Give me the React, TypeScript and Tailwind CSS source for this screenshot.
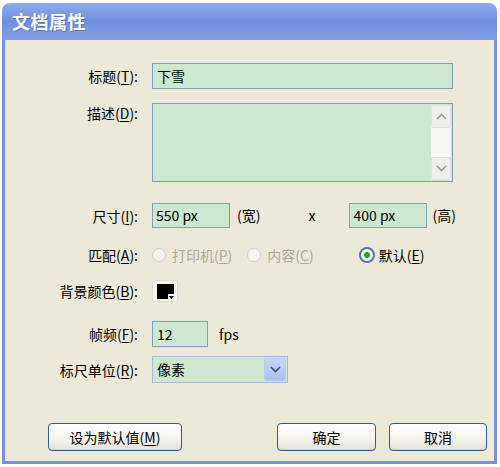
import React from "react";

const font = { fontFamily: '"Noto Sans CJK SC", "Noto Sans", sans-serif' };

function Label({ children }: { children: React.ReactNode }) {
  return (
    <div className="w-[133px] text-right text-[14px] leading-none text-black shrink-0">
      {children}
    </div>
  );
}

function U({ children }: { children: React.ReactNode }) {
  return <span className="underline underline-offset-2">{children}</span>;
}

function Chevron({ up, color = "#9b9b9b" }: { up?: boolean; color?: string }) {
  return (
    <svg width="11" height="7" viewBox="0 0 11 7">
      <path
        d={up ? "M1 6 L5.5 1.5 L10 6" : "M1 1 L5.5 5.5 L10 1"}
        fill="none"
        stroke={color}
        strokeWidth="1.6"
      />
    </svg>
  );
}

function Radio({ checked, disabled }: { checked?: boolean; disabled?: boolean }) {
  return (
    <div
      className={
        "rounded-full flex items-center justify-center shrink-0 " +
        (disabled
          ? "w-[14px] h-[14px] border border-[#d2d0c4] bg-[#f4f3ee]"
          : "w-[16px] h-[16px] border-2 border-[#4f74a4] bg-white")
      }
    >
      {checked && <div className="w-[6px] h-[6px] rounded-full bg-[#21a121]" />}
    </div>
  );
}

function Button({ children, w }: { children: React.ReactNode; w: string }) {
  return (
    <div
      className={
        w +
        " h-[28px] rounded-[4px] border border-[#2f5d8c] bg-gradient-to-b from-[#ffffff] via-[#f6f5f0] to-[#e3e1d8] flex items-center justify-center text-[14px] text-black shadow-[inset_0_-1px_0_#d6d0c0]"
      }
    >
      {children}
    </div>
  );
}

export default function App() {
  return (
    <div className="w-[500px] h-[467px] bg-white pt-[3px] pl-[2px]" style={font}>
      <div className="w-[495px] rounded-t-[8px] overflow-hidden">
        <div className="h-[37px] bg-gradient-to-b from-[#8fabee] via-[#6f8fe0] to-[#7d9fe8] flex items-center pl-[10px]">
          <span className="text-white text-[18px] font-bold tracking-[0.5px] [text-shadow:1px_1px_0_#5a74c0]">
            文档属性
          </span>
        </div>
        <div className="h-[424px] bg-[#ece9d8] border-l-[3px] border-r-[3px] border-b-[3px] border-[#7b90e0] flex flex-col">
          {/* title */}
          <div className="mt-[23px] flex items-center h-[26px]">
            <Label>
              标题(<U>T</U>):
            </Label>
            <div className="ml-[14px] w-[301px] h-[26px] bg-[#cde8cf] border border-[#7f9db9] flex items-center pl-[4px] text-[14px] text-black">
              下雪
            </div>
          </div>
          {/* desc */}
          <div className="mt-[14px] flex items-start h-[79px]">
            <div className="pt-[3px]">
              <Label>
                描述(<U>D</U>):
              </Label>
            </div>
            <div className="ml-[14px] w-[301px] h-[79px] bg-[#cde8cf] border border-[#7f9db9] flex justify-end p-[1px]">
              <div className="w-[20px] h-full bg-[#f7f7f4] flex flex-col justify-between">
                <div className="h-[23px] rounded-[2px] bg-[#efeeea] border border-[#e2e0d8] flex items-center justify-center">
                  <Chevron up />
                </div>
                <div className="h-[23px] rounded-[2px] bg-[#efeeea] border border-[#e2e0d8] flex items-center justify-center">
                  <Chevron />
                </div>
              </div>
            </div>
          </div>
          {/* size */}
          <div className="mt-[21px] flex items-center h-[25px] text-[14px] text-black">
            <Label>
              尺寸(<U>I</U>):
            </Label>
            <div className="ml-[14px] w-[78px] h-[25px] bg-[#cde8cf] border border-[#7f9db9] flex items-center pl-[3px]">
              550 px
            </div>
            <span className="ml-[7px]">(宽)</span>
            <span className="ml-[48px]">x</span>
            <div className="ml-[34px] w-[78px] h-[25px] bg-[#cde8cf] border border-[#7f9db9] flex items-center pl-[3px]">
              400 px
            </div>
            <span className="ml-[5px]">(高)</span>
          </div>
          {/* match */}
          <div className="mt-[17px] flex items-center h-[20px] text-[14px]">
            <Label>
              匹配(<U>A</U>):
            </Label>
            <div className="ml-[14px] flex items-center">
              <Radio disabled />
              <span className="ml-[6px] text-[#aca899]">
                打印机(<U>P</U>)
              </span>
            </div>
            <div className="ml-[15px] flex items-center">
              <Radio disabled />
              <span className="ml-[6px] text-[#aca899]">
                内容(<U>C</U>)
              </span>
            </div>
            <div className="ml-[45px] flex items-center">
              <Radio checked />
              <span className="ml-[4px] text-black">
                默认(<U>E</U>)
              </span>
            </div>
          </div>
          {/* bg color */}
          <div className="mt-[15px] flex items-center h-[22px]">
            <Label>
              背景颜色(<U>B</U>):
            </Label>
            <div className="ml-[14px] w-[26px] h-[22px] bg-[#f4f3ee] border border-[#e0ddd0] rounded-[2px] flex items-center justify-center">
              <div className="relative w-[17px] h-[15px] bg-black">
                <div className="absolute right-0 bottom-0 w-[6px] h-[5px] bg-[#f4f3ee] flex items-end justify-end">
                  <svg width="5" height="3" viewBox="0 0 5 3">
                    <path d="M0 0 L5 0 L2.5 3 Z" fill="#000" />
                  </svg>
                </div>
              </div>
            </div>
          </div>
          {/* fps */}
          <div className="mt-[19px] flex items-center h-[26px] text-[14px] text-black">
            <Label>
              帧频(<U>F</U>):
            </Label>
            <div className="ml-[14px] w-[56px] h-[26px] bg-[#cde8cf] border border-[#7f9db9] flex items-center pl-[4px]">
              12
            </div>
            <span className="ml-[11px]">fps</span>
          </div>
          {/* ruler */}
          <div className="mt-[9px] flex items-center h-[27px] text-[14px] text-black">
            <Label>
              标尺单位(<U>R</U>):
            </Label>
            <div className="ml-[14px] w-[136px] h-[27px] bg-[#cde8cf] border border-[#a5bbd6] flex items-center">
              <span className="pl-[4px] flex-1">像素</span>
              <div className="w-[22px] h-[23px] mr-[1px] rounded-[2px] bg-gradient-to-b from-[#c6d6fb] to-[#a9c2f5] border border-[#b8cbf2] flex items-center justify-center">
                <Chevron color="#3a4f7e" />
              </div>
            </div>
          </div>
          {/* buttons */}
          <div className="mt-[40px] flex items-center pl-[43px] pr-[7px]">
            <Button w="w-[134px]">
              设为默认值(<U>M</U>)
            </Button>
            <div className="flex-1" />
            <Button w="w-[99px]">确定</Button>
            <div className="w-[13px]" />
            <Button w="w-[98px]">取消</Button>
          </div>
        </div>
      </div>
    </div>
  );
}
